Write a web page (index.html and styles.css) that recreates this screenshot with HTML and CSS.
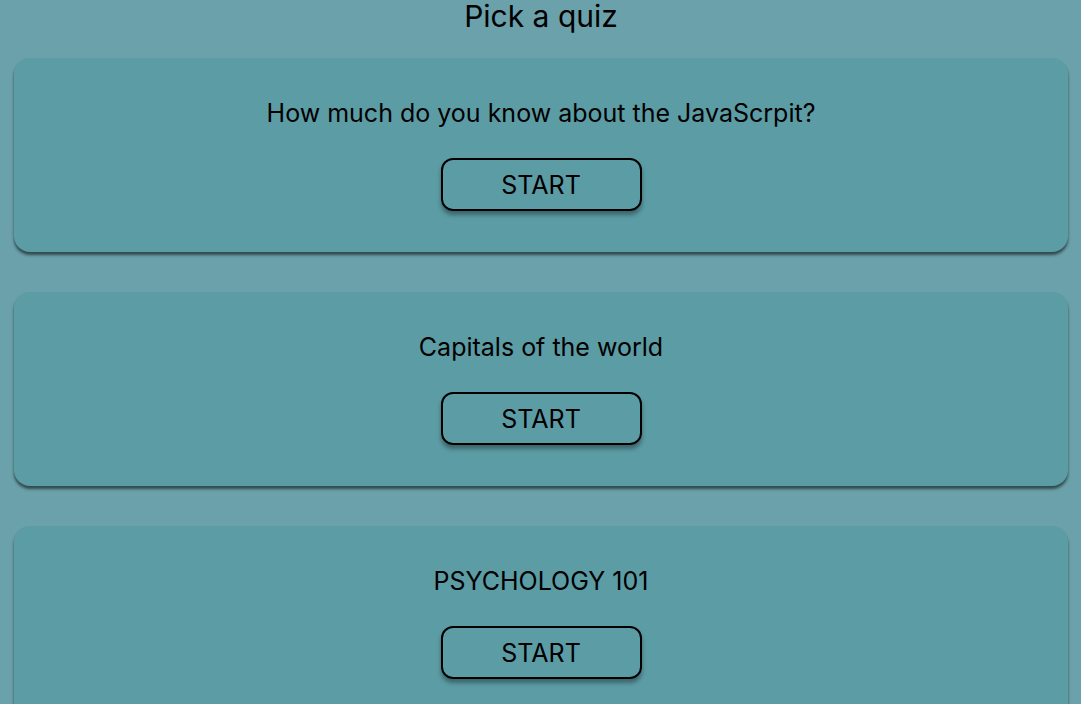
FILE: index.html
```html
<!DOCTYPE html>
<html lang="en">
<head>
<meta charset="utf-8">
<title>Pick a quiz</title>
<link rel="stylesheet" href="styles.css">
</head>
<body>
<main class="page">
  <h1 class="title">Pick a quiz</h1>
  <section class="list">
    <article class="card">
      <h2 class="card-title">How much do you know about the JavaScrpit?</h2>
      <button class="start">START</button>
    </article>
    <article class="card">
      <h2 class="card-title">Capitals of the world</h2>
      <button class="start">START</button>
    </article>
    <article class="card">
      <h2 class="card-title">PSYCHOLOGY 101</h2>
      <button class="start">START</button>
    </article>
  </section>
</main>
</body>
</html>
```
FILE: styles.css
```css
html, body {
  margin: 0;
  padding: 0;
  background: #6ba1aa;
  font-family: Inter, "Noto Sans", sans-serif;
  color: #000;
}
.page {
  padding: 0 13px 0 14px;
}
.title {
  margin: 0 0 26px;
  font-size: 30px;
  line-height: 32px;
  font-weight: 400;
  text-align: center;
}
.list {
  display: flex;
  flex-direction: column;
  gap: 40px;
}
.card {
  background: #5c9ca5;
  border-radius: 16px;
  box-shadow: 0 3px 3px rgba(0, 0, 0, 0.55);
  padding: 41px 0 41px;
  display: flex;
  flex-direction: column;
  align-items: center;
}
.card-title {
  margin: 0 0 31px;
  font-size: 25px;
  line-height: 28px;
  font-weight: 400;
  text-align: center;
}
.start {
  width: 201px;
  height: 53px;
  background: transparent;
  border: 2px solid #000;
  border-radius: 12px;
  box-shadow: 0 4px 4px rgba(0, 0, 0, 0.35);
  font-family: Inter, "Noto Sans", sans-serif;
  font-size: 25px;
  color: #000;
  cursor: pointer;
}
```
